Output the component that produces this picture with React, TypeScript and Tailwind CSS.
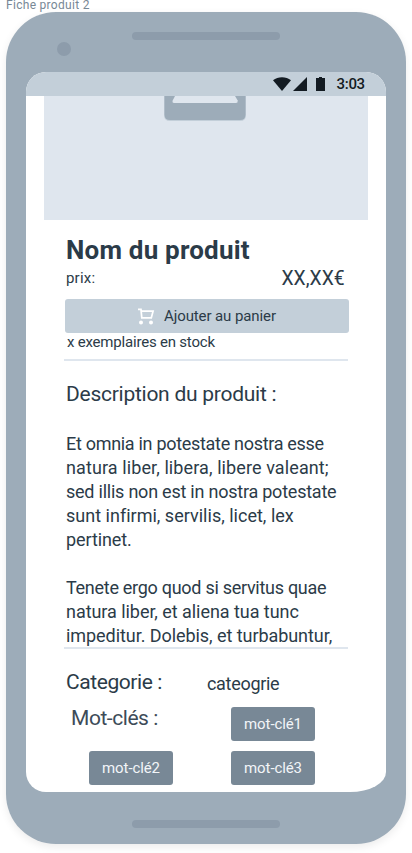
import React from "react";

const descriptionLines = [
  { text: "Et omnia in potestate nostra esse", tracking: "tracking-[-0.3px]" },
  { text: "natura liber, libera, libere valeant;", tracking: "tracking-[0.1px]" },
  { text: "sed illis non est in nostra potestate", tracking: "tracking-[-0.23px]" },
  { text: "sunt infirmi, servilis, licet, lex", tracking: "tracking-[0.01px]" },
  { text: "pertinet.", tracking: "tracking-[-0.1px]" },
  { text: "", tracking: "" },
  { text: "Tenete ergo quod si servitus quae", tracking: "tracking-[-0.28px]" },
  { text: "natura liber, et aliena tua tunc", tracking: "tracking-[-0.05px]" },
  { text: "impeditur. Dolebis, et turbabuntur,", tracking: "tracking-[-0.06px]" },
];

function StatusBar() {
  return (
    <div className="flex h-6 shrink-0 items-center bg-[#c3cfd9] pl-[247px] text-[#131b22]">
      <svg width="18" height="14" viewBox="0 0 18 14" className="shrink-0" fill="currentColor">
        <path d="M0 3.2C5-.9 13-.9 18 3.2L9 14Z" />
      </svg>
      <svg width="14" height="14" viewBox="0 0 14 14" className="ml-[2px] shrink-0" fill="currentColor">
        <path d="M14 0V14H0Z" />
      </svg>
      <svg width="9" height="14" viewBox="0 0 9 14" className="ml-[9px] shrink-0" fill="currentColor">
        <path d="M3 0H6V1H9V14H0V1H3Z" />
      </svg>
      <span className="ml-[11.5px] text-[15px] leading-6 font-medium tracking-[-0.3px]">3:03</span>
    </div>
  );
}

function CartIcon() {
  return (
    <svg width="17" height="17" viewBox="0 0 17 17" className="shrink-0" fill="none" stroke="#fff" strokeWidth="1.7">
      <path d="M0 1.4H3L3.8 9.8H13.3L15.1 3.1H3.4" />
      <circle cx="3" cy="14.4" r="2" fill="#fff" stroke="none" />
      <circle cx="13" cy="14.4" r="2" fill="#fff" stroke="none" />
    </svg>
  );
}

function Tag({ children }: { children: string }) {
  return (
    <button className="h-[34px] w-[84px] rounded-[3px] bg-[#788896] text-[15px] leading-[34px] tracking-[-0.1px] whitespace-nowrap text-[#f2f5f8]">
      {children}
    </button>
  );
}

export default function App() {
  return (
    <div className="flex h-[853px] w-[412px] flex-col overflow-hidden bg-white font-['Roboto',sans-serif] whitespace-nowrap text-[#2b3b48]">
      <div className="flex h-3 shrink-0 items-start pl-[6px]">
        <p className="text-[12px] leading-[10px] tracking-[0.3px] text-[#788896]">Fiche produit 2</p>
      </div>
      <div className="ml-[6px] flex h-[832px] w-[400px] shrink-0 flex-col rounded-[50px] bg-[#9dacb9] shadow-[0_3px_8px_rgba(0,0,0,0.08)]">
        <div className="flex h-[60px] shrink-0 items-start">
          <div className="mt-[30px] ml-[51px] size-[14px] rounded-full bg-[#8d9cab]" />
          <div className="mt-5 ml-[61px] h-2 w-[148px] rounded-full bg-[#8d9cab]" />
        </div>
        <div className="ml-5 flex h-[720px] w-[360px] shrink-0 flex-col overflow-hidden rounded-[20px] rounded-br-[36px_20px] bg-white">
          <StatusBar />
          <div className="mx-[18px] flex h-[124px] shrink-0 justify-center bg-[#dfe6ee]">
            <svg width="82" height="25" viewBox="0 0 82 25" className="-ml-[2px]">
              <path d="M0 0H82V19Q82 25 76 25H6Q0 25 0 19Z" fill="#c3cfd9" />
              <path d="M.5 0H81.5V18.5Q81.5 24 76 24H6Q.5 24 .5 18.5Z" fill="#9dacb9" />
              <path d="M11 0H71L73.7 4.5Q74 7 72 7H10Q8 7 8.7 4.5Z" fill="#dfe6ee" />
            </svg>
          </div>
          <div className="flex h-[139px] shrink-0 flex-col pt-[14px] pr-[37px] pl-10">
            <h1 className="h-8 text-[26px] leading-8 font-bold tracking-[0.2px]">Nom du produit</h1>
            <div className="flex h-[33px] justify-between pr-1">
              <span className="text-[15px] leading-6 tracking-[0.2px]">prix:</span>
              <span className="origin-right scale-x-[0.92] text-[21px] leading-6">XX,XX€</span>
            </div>
            <button className="-ml-px flex h-[34px] w-[284px] items-center rounded-[3px] bg-[#c3cfd9] pl-[73px]">
              <CartIcon />
              <span className="ml-[9px] text-[15px] leading-[34px] tracking-[-0.1px]">Ajouter au panier</span>
            </button>
            <p className="pl-px text-[15px] leading-[18px] tracking-[-0.2px]">x exemplaires en stock</p>
          </div>
          <div className="ml-[38px] h-[2px] w-[284px] shrink-0 bg-[#dfe6ee]" />
          <div className="h-[286px] shrink-0 pt-[21px] pl-10">
            <h2 className="text-[21px] leading-6 tracking-[-0.26px]">Description du produit :</h2>
            <div className="mt-[26px]">
              {descriptionLines.map((line, i) => (
                <p key={i} className={`h-6 text-[18px] leading-6 ${line.tracking}`}>
                  {line.text}
                </p>
              ))}
            </div>
          </div>
          <div className="ml-[38px] h-[2px] w-[284px] shrink-0 bg-[#dfe6ee]" />
          <div className="flex h-[45px] shrink-0 items-start pt-[21px] pl-10">
            <h2 className="w-[141px] text-[21px] leading-6 tracking-[-0.42px]">Categorie :</h2>
            <span className="pt-[2px] text-[18px] leading-6 tracking-[-0.3px]">cateogrie</span>
          </div>
          <div className="flex h-[47px] shrink-0 pl-[45px]">
            <h2 className="mt-3 w-40 text-[21px] leading-6 tracking-[-0.45px] text-[#3d4b58]">Mot-clés :</h2>
            <div className="pt-[13px]">
              <Tag>mot-clé1</Tag>
            </div>
          </div>
          <div className="mt-[10px] flex gap-[58px] pl-[63px]">
            <Tag>mot-clé2</Tag>
            <Tag>mot-clé3</Tag>
          </div>
        </div>
        <div className="mt-7 ml-[126px] h-2 w-[148px] rounded-full bg-[#8d9cab]" />
      </div>
    </div>
  );
}
